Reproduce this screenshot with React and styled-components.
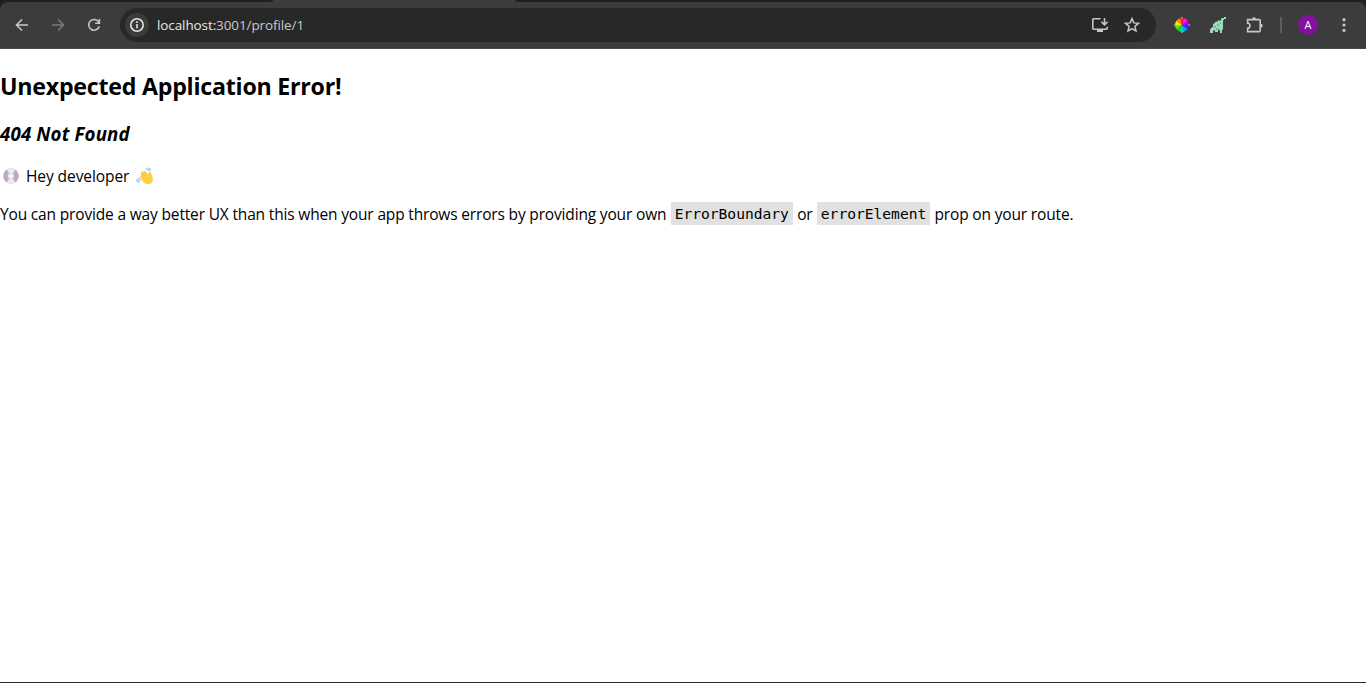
import React from "react";
import styled, { createGlobalStyle } from "styled-components";

const GlobalStyle = createGlobalStyle`
  * { box-sizing: border-box; }
  body { margin: 0; background: #fff; overflow: hidden; }
`;

const Window = styled.div`
  display: flex;
  flex-direction: column;
  height: 100vh;
  background: #fff;
  color: #000;
  font-family: "Open Sans", "Noto Sans", sans-serif;
  border-bottom: 1px solid #2b2b2b;
`;

const TabStrip = styled.div`
  display: flex;
  height: 2px;
  flex: none;
  background: #3c3c3c;
`;

const StripPart = styled.div`
  width: ${(p) => p.$width};
  flex: ${(p) => (p.$width ? "none" : 1)};
  margin-left: ${(p) => p.$gap || 0};
  background: #1f2020;
  border-radius: ${(p) => p.$radius};
`;

const ToolbarBack = styled.div`
  flex: none;
  background: #1f2020;
`;

const Toolbar = styled.header`
  display: flex;
  align-items: center;
  height: 47px;
  padding: 0 10px;
  background: #3c3c3c;
  border-bottom: 1px solid #484848;
  border-radius: 8px 8px 0 0;
`;

const IconButton = styled.button`
  display: grid;
  place-items: center;
  width: 24px;
  height: 24px;
  margin-right: ${(p) => p.$gap || "12px"};
  padding: 0;
  border: 0;
  background: none;
  color: ${(p) => p.$color || "#c7c7c7"};
  flex: none;
`;

const AddressBar = styled.div`
  display: flex;
  align-items: center;
  width: 1036px;
  height: 34px;
  margin: 0 14px 0 2px;
  padding: 0 0 0 5px;
  border-radius: 17px;
  background: #282828;
  flex: none;
`;

const SiteInfo = styled.span`
  display: grid;
  place-items: center;
  width: 24px;
  height: 24px;
  margin-right: 8px;
  border-radius: 50%;
  background: #3c3c3c;
  color: #e3e3e3;
`;

const Address = styled.span`
  flex: 1;
  color: #c7c7c7;
  font-size: 13.5px;
  line-height: 20px;
  letter-spacing: -0.1px;
`;

const Host = styled.span`
  color: #e8e8e8;
`;

const Divider = styled.span`
  width: 2px;
  height: 16px;
  margin: 0 16px 0 0;
  background: #5e5e5e;
  flex: none;
`;

const Avatar = styled.span`
  display: grid;
  place-items: center;
  width: 20px;
  height: 20px;
  margin-right: 14px;
  border-radius: 50%;
  background: #8412a0;
  color: #fff;
  font-size: 11px;
  line-height: 20px;
  flex: none;
`;

const Page = styled.main`
  flex: 1;
  padding-top: 21px;
`;

const Title = styled.h2`
  margin: 0 0 19px;
  font-size: 23.2px;
  line-height: 32px;
  letter-spacing: -0.24px;
  white-space: nowrap;
`;

const Status = styled.h3`
  margin: 0 0 19px;
  font-size: 18.7px;
  line-height: 25px;
  letter-spacing: 0.15px;
  font-style: italic;
`;

const Hint = styled.p`
  display: flex;
  align-items: center;
  height: 21px;
  margin: 0 0 16px;
  padding-left: 3px;
  gap: 7px;
  font-size: 15.5px;
  letter-spacing: -0.08px;
`;

const Advice = styled.p`
  display: flex;
  align-items: center;
  height: 23px;
  margin: 0;
  font-size: 15.5px;
  letter-spacing: -0.165px;
  white-space: nowrap;
`;

const Code = styled.code`
  display: block;
  height: 23px;
  margin: 0 4.3px;
  padding: 0 4px;
  background: #e1e1e1;
  font-family: "DejaVu Sans Mono", monospace;
  font-size: 14.6px;
  line-height: 24px;
  letter-spacing: 0;
`;

const line = { fill: "none", stroke: "currentColor", strokeWidth: 1.6 };

const BackIcon = () => (
  <svg width="16" height="16" viewBox="0 0 16 16" {...line}>
    <path d="M14 8H3M8 2.5 2.5 8 8 13.5" />
  </svg>
);
const ForwardIcon = () => (
  <svg width="16" height="16" viewBox="0 0 16 16" {...line}>
    <path d="M2 8h11M8 2.5 13.5 8 8 13.5" />
  </svg>
);
const ReloadIcon = () => (
  <svg width="16" height="16" viewBox="0 0 16 16" {...line}>
    <path d="M12.8 5.2A5.4 5.4 0 1 0 13.3 9.3M13.4 2v4.2H9.2" />
  </svg>
);
const InfoIcon = () => (
  <svg width="16" height="16" viewBox="0 0 16 16" {...line}>
    <circle cx="8" cy="8" r="6.2" />
    <path d="M8 7v4.3M8 4.3v1.7" />
  </svg>
);
const InstallIcon = () => (
  <svg width="18" height="18" viewBox="0 0 18 18" {...line}>
    <path d="M9.5 2.8H2.8a1 1 0 0 0-1 1v8.4a1 1 0 0 0 1 1h12.4a1 1 0 0 0 1-1v-1.4M13.5 2v6.5M10.4 5.8l3.1 3.1 3.1-3.1" />
    <path d="M6 14h6v2H6z" fill="currentColor" stroke="none" />
  </svg>
);
const StarIcon = () => (
  <svg width="18" height="18" viewBox="0 0 18 18" {...line} strokeWidth="1.5">
    <path d="m9 2.6 1.8 4.3 4.7.4-3.6 3 1.1 4.6L9 12.5l-4 2.4 1.1-4.6-3.6-3 4.7-.4z" />
  </svg>
);
const wheel = ["#ff1a2e", "#ff18c8", "#b000ff", "#2430ff", "#0b9cf0", "#00d8c0", "#10d830", "#66f000", "#f2f000", "#ff8a00"];
const WheelIcon = () => (
  <svg width="16" height="16" viewBox="-8 -8 16 16">
    {wheel.map((color, i) => {
      const a = ((i * 36 - 108) * Math.PI) / 180;
      const b = a + (37 * Math.PI) / 180;
      const r = 7;
      return (
        <path
          key={color}
          fill={color}
          d={`M0 0L${r * Math.cos(a)} ${r * Math.sin(a)}A${r} ${r} 0 0 1 ${r * Math.cos(b)} ${r * Math.sin(b)}Z`}
        />
      );
    })}
    <path fill="#8f8f8f" d="M-1-8h2v1.5h-2zM-1 6.5h2V8h-2zM-8-1h1.5v2H-8zM6.5-1H8v2H6.5z" />
  </svg>
);
const DinoIcon = () => (
  <svg width="18" height="18" viewBox="0 0 18 18">
    <path
      fill="#9bdcbd"
      d="M1 17v-3l1-2 2-1V8l2-1 1-2 1 1 2-2 1 1 1-1V3l1-1h2V1h2v2h-2l-1 2v8l-1 1v3h-2v-3H9v2H6v-2l-2 1v2z"
    />
    <path stroke="#51705f" strokeWidth="0.8" fill="none" d="M5 11h2M9 8v2M7 13h3M11 7.5h1" />
  </svg>
);
const PuzzleIcon = () => (
  <svg width="18" height="18" viewBox="0 0 18 18" {...line}>
    <path d="M2.6 3.6h11.6a1 1 0 0 1 1 1v10a1 1 0 0 1-1 1H2.6v-3.3c1.4 0 2.3-1.1 2.3-2.6S4 7.1 2.6 7.1z" />
    <path d="M7 3.2a2 2 0 0 1 4 0zM15.7 7.7a2 2 0 0 1 0 4z" fill="currentColor" stroke="none" />
  </svg>
);
const MenuIcon = () => (
  <svg width="16" height="16" viewBox="0 0 16 16" fill="currentColor">
    <circle cx="8" cy="2.7" r="1.6" />
    <circle cx="8" cy="8" r="1.6" />
    <circle cx="8" cy="13.3" r="1.6" />
  </svg>
);
const DiscIcon = () => (
  <svg width="16" height="16" viewBox="0 0 16 16">
    <circle cx="8" cy="8" r="7.8" fill="#b9acc1" />
    <path fill="#eee8f2" d="M8 8 3.6 1.6a7.8 7.8 0 0 1 8.8 0zM8 8l4.4 6.4a7.8 7.8 0 0 1-8.8 0z" />
    <circle cx="8" cy="8" r="3.2" fill="#e6dfea" />
    <circle cx="8" cy="8" r="1.6" fill="#fff" />
  </svg>
);
const WaveIcon = () => (
  <svg width="18" height="18" viewBox="0 0 18 18">
    <path
      fill="#fcd03f"
      d="M4.9 7.6c-.8-.9.3-1.8 1.1-1.1L5.5 5.2c-.5-1 .8-1.7 1.5-.8l.9.7c-.3-1.1 1-1.6 1.6-.7l3 3.3.1-2.2c.1-1.2 2.1-1.2 2.4 0l1.7 5.4c.7 3-.9 5.9-3.8 6.2-2.5.3-4.4-.7-5.7-2.4l-3.2-4.2c-.6-.9.2-1.7.9-1.1z"
    />
    <path fill="none" stroke="#efb32f" strokeWidth=".4" d="m6.2 6.6 3 3.6M8 5.3l3 3.5" />
    <path fill="none" stroke="#8cc4f2" strokeWidth="1.2" d="M9.8 2.3c1.4-.5 2.8.3 3 1.8M11.7 1c1.6 0 2.8 1 3 2.5M2.5 10.8c0 1.5.8 2.5 2.3 2.7M.8 12c0 1.9 1.1 3.1 2.8 3.3" />
  </svg>
);

export default function App() {
  return (
    <Window>
      <GlobalStyle />
      <TabStrip>
        <StripPart $width="273px" $radius="0 0 5px 0" />
        <StripPart $gap="242px" $radius="0 0 0 5px" />
      </TabStrip>
      <ToolbarBack>
        <Toolbar>
          <IconButton aria-label="Back"><BackIcon /></IconButton>
          <IconButton aria-label="Forward" $color="#7a7a7a"><ForwardIcon /></IconButton>
          <IconButton aria-label="Reload"><ReloadIcon /></IconButton>
          <AddressBar>
            <SiteInfo><InfoIcon /></SiteInfo>
            <Address><Host>localhost:</Host>3001/profile/1</Address>
            <IconButton aria-label="Install app" $gap="8px"><InstallIcon /></IconButton>
            <IconButton aria-label="Bookmark"><StarIcon /></IconButton>
          </AddressBar>
          <IconButton aria-label="Color picker"><WheelIcon /></IconButton>
          <IconButton aria-label="Dinosaur"><DinoIcon /></IconButton>
          <IconButton aria-label="Extensions" $gap="14px"><PuzzleIcon /></IconButton>
          <Divider />
          <Avatar>A</Avatar>
          <IconButton aria-label="Menu" $gap="0"><MenuIcon /></IconButton>
        </Toolbar>
      </ToolbarBack>
      <Page>
        <Title>Unexpected Application Error!</Title>
        <Status>404 Not Found</Status>
        <Hint><DiscIcon /><span>Hey developer</span><WaveIcon /></Hint>
        <Advice>
          <span>You can provide a way better UX than this when your app throws errors by providing your own</span>
          <Code>ErrorBoundary</Code>
          <span>or</span>
          <Code>errorElement</Code>
          <span>prop on your route.</span>
        </Advice>
      </Page>
    </Window>
  );
}
